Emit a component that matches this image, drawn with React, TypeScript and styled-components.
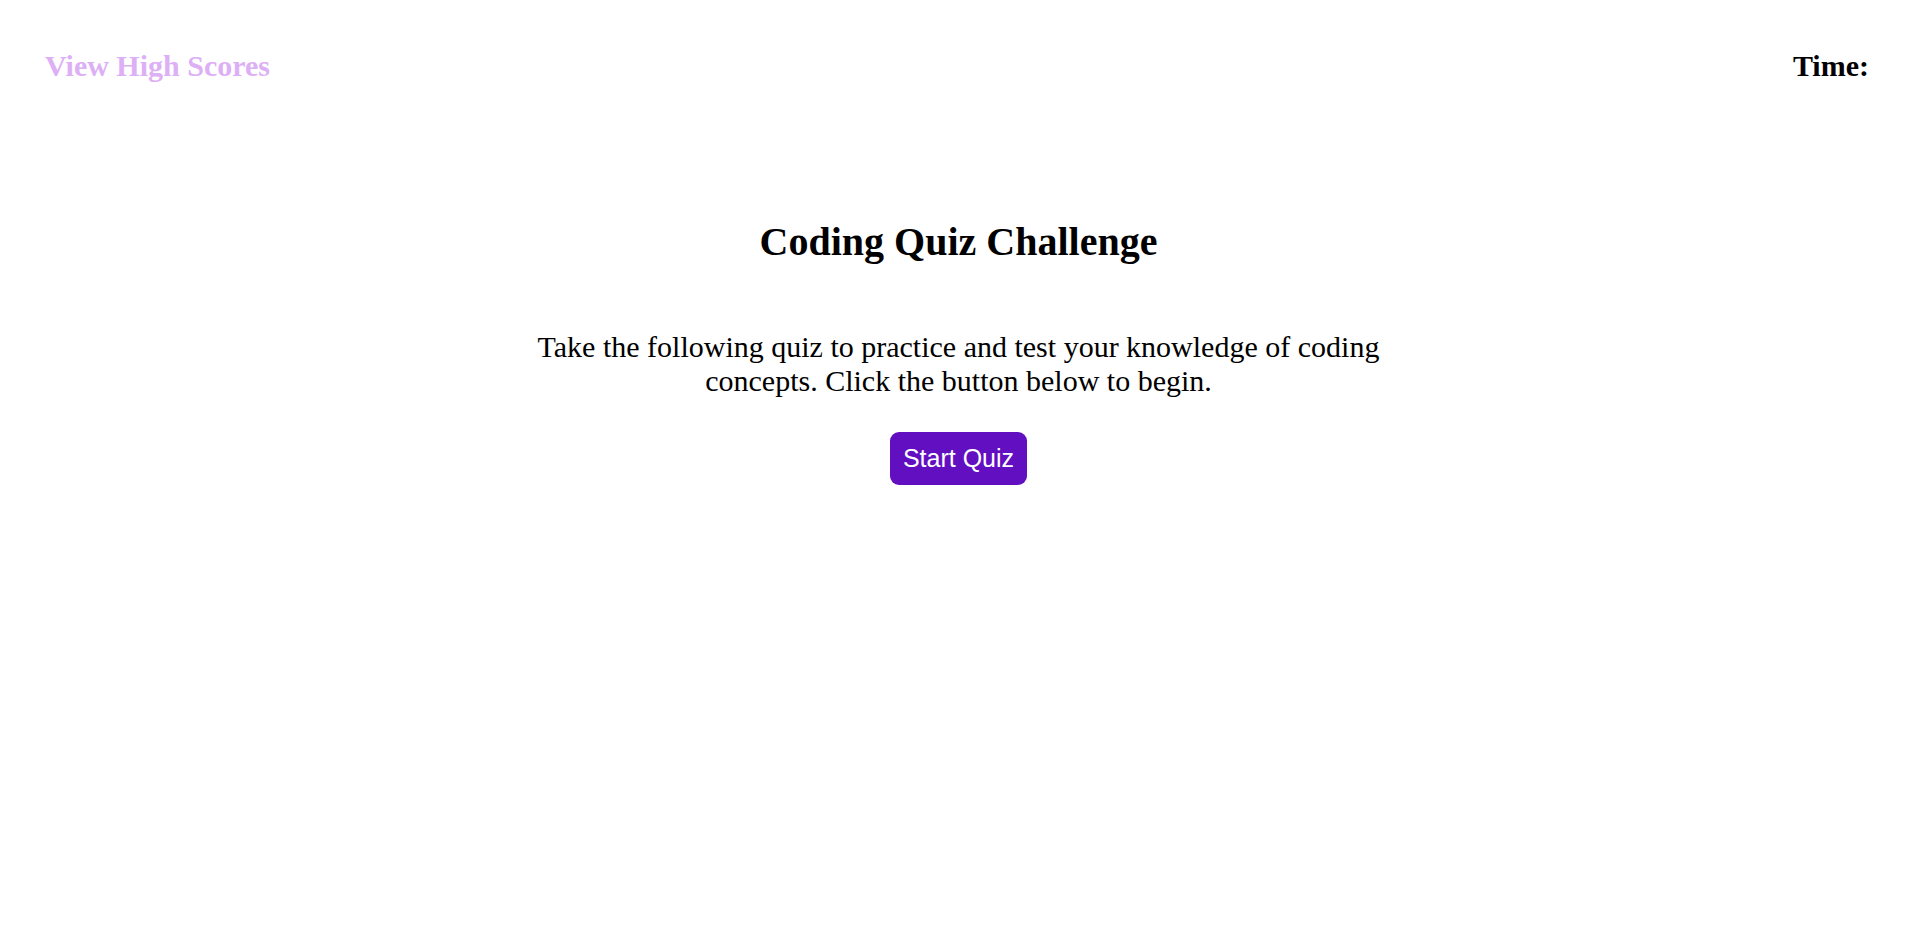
import React from "react";
import styled, { createGlobalStyle } from "styled-components";

const GlobalStyle = createGlobalStyle`
  html, body {
    margin: 0;
    padding: 0;
    background: #ffffff;
  }
  body {
    font-family: "Liberation Serif", "Times New Roman", serif;
    color: #000000;
  }
`;

const Page = styled.div`
  display: flex;
  flex-direction: column;
  min-height: 941px;
`;

const Header = styled.header`
  display: flex;
  justify-content: space-between;
  align-items: baseline;
  padding: 49px 48px 0 45px;
`;

const HighScoresLink = styled.a`
  font-family: "Liberation Serif", "Times New Roman", serif;
  font-weight: bold;
  font-size: 30px;
  color: #ddb0f6;
  text-decoration: none;
  cursor: pointer;
`;

const Timer = styled.div`
  font-family: "Liberation Serif", "Times New Roman", serif;
  font-weight: bold;
  font-size: 30px;
  color: #000000;
`;

const Main = styled.main`
  display: flex;
  flex-direction: column;
  align-items: center;
  text-align: center;
  padding-top: 135px;
`;

const Title = styled.h1`
  margin: 0;
  font-size: 40px;
  font-weight: bold;
`;

const Intro = styled.p`
  margin: 65px 0 0;
  width: 880px;
  font-size: 30px;
  font-weight: normal;
`;

const StartButton = styled.button`
  margin-top: 34px;
  padding: 12px 12.5px;
  border: none;
  border-radius: 9px;
  background: #620fc1;
  color: #ffffff;
  font-family: "Liberation Sans", Arial, sans-serif;
  font-size: 25px;
  line-height: normal;
  cursor: pointer;
`;

export default function App() {
  return (
    <Page>
      <GlobalStyle />
      <Header>
        <HighScoresLink>View High Scores</HighScoresLink>
        <Timer>Time:</Timer>
      </Header>
      <Main>
        <Title>Coding Quiz Challenge</Title>
        <Intro>
          Take the following quiz to practice and test your knowledge of coding
          concepts. Click the button below to begin.
        </Intro>
        <StartButton>Start Quiz</StartButton>
      </Main>
    </Page>
  );
}
